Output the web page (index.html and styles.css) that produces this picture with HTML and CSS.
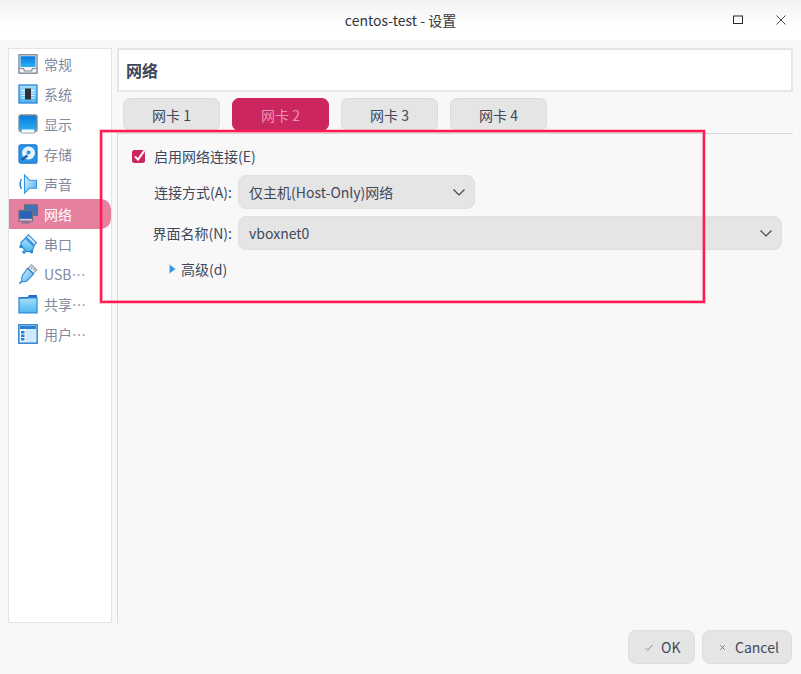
FILE: index.html
```html
<!DOCTYPE html>
<html lang="zh-CN">
<head>
<meta charset="utf-8">
<title>centos-test - 设置</title>
<link rel="stylesheet" href="styles.css">
</head>
<body>
<div class="window">
  <header class="titlebar">
    <span class="title">centos-test - 设置</span>
    <div class="win-controls">
      <svg class="win-icon" viewBox="0 0 10 10"><rect x="0.5" y="1" width="9" height="7.5" fill="none" stroke="#2b2b2b" stroke-width="1"/></svg>
      <svg class="win-icon" viewBox="0 0 10 10"><path d="M0.5 0.5L9.5 9.5M9.5 0.5L0.5 9.5" stroke="#444" stroke-width="1"/></svg>
    </div>
  </header>
  <div class="body">
    <nav class="sidebar">
      <div class="nav-item">
        <svg class="ico" viewBox="0 0 20 20">
          <defs>
            <linearGradient id="screen" x1="0" y1="0" x2="0" y2="1"><stop offset="0" stop-color="#0878dc"/><stop offset="1" stop-color="#2cb2f6"/></linearGradient>
            <linearGradient id="pale" x1="0" y1="0" x2="0" y2="1"><stop offset="0" stop-color="#a6e0fa"/><stop offset="1" stop-color="#4fb4ee"/></linearGradient>
            <linearGradient id="paleh" x1="0" y1="0" x2="1" y2="1"><stop offset="0" stop-color="#dff3fd"/><stop offset="1" stop-color="#4aaeeb"/></linearGradient>
          </defs>
          <rect x="1" y="0.800" width="18" height="18.400" fill="#f6f6f6" stroke="#7f8a96" stroke-width="1.400"/>
          <rect x="2.500" y="2.200" width="15" height="10.800" fill="url(#screen)"/>
          <path d="M1 14.500h4.500l1 2.500h7l1-2.500H19" fill="none" stroke="#7f8a96" stroke-width="1.200"/>
        </svg>
        <span>常规</span>
      </div>
      <div class="nav-item">
        <svg class="ico" viewBox="0 0 20 20">
          <rect x="1" y="1" width="18" height="18" fill="url(#pale)" stroke="#2a86d6" stroke-width="1.300"/>
          <path d="M3.500 6.500h13M3.500 9h13M3.500 11.500h13M3.500 14h13" stroke="#e4f5fd" stroke-width="1"/>
          <rect x="7" y="4.500" width="6" height="11" fill="#2d3036"/>
        </svg>
        <span>系统</span>
      </div>
      <div class="nav-item">
        <svg class="ico" viewBox="0 0 20 20">
          <rect x="1" y="1" width="18" height="16.500" rx="2" fill="url(#screen)" stroke="#7f8a96" stroke-width="1.400"/>
          <path d="M4 15.500h12l1 3.500H3z" fill="#fbfbfb"/>
          <path d="M1.500 15.500l2 3.500h13l2-3.500" fill="none" stroke="#9aa4ae" stroke-width="1"/>
        </svg>
        <span>显示</span>
      </div>
      <div class="nav-item">
        <svg class="ico" viewBox="0 0 20 20">
          <rect x="1" y="0.800" width="18" height="18.400" rx="2" fill="#2a94e8" stroke="#1c78cc" stroke-width="1.200"/>
          <circle cx="10.500" cy="9" r="6.500" fill="#e8f4fc"/>
          <circle cx="10.500" cy="8.500" r="2" fill="#2a94e8"/>
          <path d="M3.500 16l6-4.500" stroke="#1b5ea6" stroke-width="2.400"/>
        </svg>
        <span>存储</span>
      </div>
      <div class="nav-item">
        <svg class="ico" viewBox="0 0 20 20">
          <path d="M6.500 1l5 5.200h7v8h-7l-5 5z" fill="url(#paleh)" stroke="#3497e2" stroke-width="1.100"/>
          <path d="M3.500 5q-2.600 5 0 10" fill="none" stroke="#2a86d6" stroke-width="1.300"/>
          <path d="M1.600 8q-.9 2 0 4" fill="none" stroke="#7cc0ee" stroke-width="1"/>
        </svg>
        <span>声音</span>
      </div>
      <div class="nav-item active">
        <svg class="ico" viewBox="0 0 20 20">
          <rect x="6.500" y="0.800" width="13" height="10.500" fill="#3f74b8" stroke="#6a6f86" stroke-width="1.200"/>
          <rect x="1" y="6.500" width="13.500" height="10.500" fill="#2a62ba" stroke="#6a6f86" stroke-width="1.200"/>
          <path d="M1.500 14.800h12.500v1.800H1.500z" fill="#e4c3d0"/>
          <path d="M3.500 18.800h8.500" stroke="#6a6f86" stroke-width="1.200"/>
        </svg>
        <span>网络</span>
      </div>
      <div class="nav-item">
        <svg class="ico" viewBox="0 0 20 20">
          <path d="M10.500 0.800l8 8-2.300 2.300-8-8z" fill="#e2eff9" stroke="#2a86d6" stroke-width="1.100"/>
          <path d="M12 2.800l5 5M10.300 3.800l5.500 5.500" stroke="#8fb8da" stroke-width="0.700"/>
          <path d="M7.500 4l8.500 8.500-2 5-5.500 0-5.500-5.500 0-3.500z" fill="url(#pale)" stroke="#2a86d6" stroke-width="1.100"/>
          <circle cx="3" cy="12.500" r="1.700" fill="#2a86d6"/>
          <circle cx="13.500" cy="17.800" r="1.700" fill="#2a86d6"/>
          <circle cx="6" cy="18" r="1.700" fill="#2a86d6"/>
        </svg>
        <span>串口</span>
      </div>
      <div class="nav-item">
        <svg class="ico" viewBox="0 0 20 20">
          <path d="M13.500 0.800l5.200 5-3.300 3.400-5.200-5z" fill="#f2f2f2" stroke="#8c9ab0" stroke-width="1.100"/>
          <path d="M13.300 3.500l1 1M15.500 5.200l1 1" stroke="#5d6b82" stroke-width="1.200"/>
          <path d="M9.500 4.300l6 5.800-6.500 6.700c-1.500 1-3.500 1.300-5.200.5-.7-2-.2-4 .8-6z" fill="url(#paleh)" stroke="#2a86d6" stroke-width="1.100"/>
          <path d="M3.800 17.300l-2.300 2.300" stroke="#2a86d6" stroke-width="1.600"/>
        </svg>
        <span>USB…</span>
      </div>
      <div class="nav-item">
        <svg class="ico" viewBox="0 0 20 20">
          <path d="M9 4l2-3h8v5H9z" fill="#1f6fc4"/>
          <path d="M1 18.800V3.800h18v15z" fill="url(#pale)" stroke="#2a86d6" stroke-width="1.200"/>
          <path d="M1 3.800h9" stroke="#1f6fc4" stroke-width="1.200"/>
        </svg>
        <span>共享…</span>
      </div>
      <div class="nav-item">
        <svg class="ico" viewBox="0 0 20 20">
          <rect x="0.800" y="0.800" width="18.400" height="18.400" fill="#cfeafa" stroke="#2a7fd0" stroke-width="1.400"/>
          <rect x="2" y="2" width="16" height="3" fill="#2a7fd0"/>
          <rect x="2" y="5" width="5.500" height="13" fill="#f2fafe"/>
          <path d="M3 7h3.500v2.500H3zM3 10.500h3.500v2.500H3zM3 14h3.500v2.500H3z" fill="#2a7fd0"/>
        </svg>
        <span>用户…</span>
      </div>
    </nav>
    <main class="content">
      <div class="page-head">网络</div>
      <div class="tabs">
        <div class="tab">网卡 1</div>
        <div class="tab selected">网卡 2</div>
        <div class="tab">网卡 3</div>
        <div class="tab">网卡 4</div>
      </div>
      <section class="panel">
        <label class="check-row">
          <svg class="check" viewBox="0 0 14 14">
            <rect x="0" y="1" width="13" height="13" rx="2.500" fill="#cb2660"/>
            <path d="M3 7.500l3 3 6.500-9" fill="none" stroke="#e56a90" stroke-width="2.800"/>
            <path d="M3 7.500l3 3 6.500-9" fill="none" stroke="#fff" stroke-width="1.600"/>
          </svg>
          <span>启用网络连接(E)</span>
        </label>
        <div class="form">
          <div class="field-label">连接方式(A):</div>
          <div class="select narrow">
            <span>仅主机(Host-Only)网络</span>
            <svg class="chev" viewBox="0 0 12 7"><path d="M0.500 0.500L6 6l5.500-5.500" fill="none" stroke="#3c4658" stroke-width="1.200"/></svg>
          </div>
          <div class="field-label">界面名称(N):</div>
          <div class="select">
            <span>vboxnet0</span>
            <svg class="chev" viewBox="0 0 12 7"><path d="M0.500 0.500L6 6l5.500-5.500" fill="none" stroke="#3c4658" stroke-width="1.200"/></svg>
          </div>
        </div>
        <div class="advanced">
          <svg class="tri" viewBox="0 0 7 10"><path d="M0.500 0.500L6.500 5 0.500 9.500z" fill="#2a94e8" stroke="#a8d4f4" stroke-width="0.800"/></svg>
          <span>高级(d)</span>
        </div>
      </section>
      <div class="highlight"></div>
    </main>
  </div>
  <footer class="footer">
    <button class="btn btn-ok">
      <svg class="btn-check" viewBox="0 0 8 7"><path d="M0.500 4l2.300 2.300L7.500 0.800" fill="none" stroke="#7c8496" stroke-width="0.900"/></svg>
      OK
    </button>
    <button class="btn btn-cancel">
      <svg class="btn-x" viewBox="0 0 5 5"><path d="M0.300 0.300l4.400 4.400M4.700 0.300L0.300 4.700" stroke="#6c7486" stroke-width="0.900"/></svg>
      Cancel
    </button>
  </footer>
</div>
</body>
</html>
```
FILE: styles.css
```css
* { box-sizing: border-box; }
html, body { margin: 0; padding: 0; }
body {
  width: 801px;
  height: 674px;
  overflow: hidden;
  font-family: "Noto Sans CJK SC", "Noto Sans", sans-serif;
  font-size: 14px;
  color: #41485a;
  background: #f8f8f8;
}
.window { display: flex; flex-direction: column; height: 674px; position: relative; }
.titlebar {
  height: 40px;
  flex: none;
  background: linear-gradient(#f3f3f3, #ffffff 70%);
  position: relative;
  display: flex;
  align-items: center;
  justify-content: center;
}
.title { color: #33363c; font-size: 14px; }
.win-controls {
  position: absolute;
  right: 15px;
  top: 15px;
  display: flex;
  gap: 33px;
}
.win-icon { width: 10px; height: 10px; display: block; }
.body {
  flex: none;
  height: 583px;
  display: flex;
  padding: 8px 8px 0 8px;
  gap: 5px;
}
.sidebar {
  width: 104px;
  height: 575px;
  background: #fff;
  border: 1px solid #e4e4e4;
  display: flex;
  flex-direction: column;
}
.nav-item {
  height: 30px;
  display: flex;
  align-items: center;
  padding-left: 9px;
  gap: 6px;
  color: #7f8aa0;
  font-size: 14px;
  flex: none;
}
.nav-item.active {
  background: #e6809f;
  color: #fff;
  border-radius: 0 10px 10px 0;
}
.ico { width: 20px; height: 20px; flex: none; display: block; }
.content { flex: 1; min-width: 0; position: relative; display: flex; flex-direction: column; }
.page-head {
  height: 44px;
  flex: none;
  background: #fff;
  border: 2px solid #e5e5e5;
  padding-left: 7px;
  font-size: 16px;
  font-weight: 700;
  color: #3f475c;
  display: flex;
  align-items: center;
}
.tabs {
  display: flex;
  gap: 12px;
  padding: 6px 0 0 6px;
  height: 41px;
  flex: none;
}
.tab {
  width: 97px;
  height: 33px;
  background: #e5e5e5;
  border: 1px solid #dcdcdc;
  border-radius: 7px;
  display: flex;
  align-items: center;
  justify-content: center;
  font-size: 14px;
  color: #41485a;
}
.tab.selected { background: #cb2660; border-color: #cb2660; color: #eb93b0; }
.panel {
  flex: 1;
  border-top: 1px solid #d9d9d9;
  border-left: 1px solid #d9d9d9;
  padding: 12px 0 0 14px;
  display: flex;
  flex-direction: column;
}
.check-row { display: flex; align-items: center; gap: 8px; height: 20px; }
.check { width: 14px; height: 14px; flex: none; display: block; }
.form {
  display: grid;
  grid-template-columns: 114px 1fr;
  column-gap: 6px;
  row-gap: 7px;
  margin-top: 9px;
  margin-left: -14px;
  padding-right: 11px;
  align-items: center;
}
.field-label { text-align: right; }
.select {
  height: 34px;
  background: #e5e5e5;
  border: 1px solid #e0e0e0;
  border-radius: 8px;
  display: flex;
  align-items: center;
  justify-content: space-between;
  padding: 0 9px 0 10px;
}
.select.narrow { width: 237px; }
.chev { width: 12px; height: 7px; display: block; }
.advanced { display: flex; align-items: center; gap: 5px; margin: 9px 0 0 37px; height: 20px; }
.tri { width: 7px; height: 10px; display: block; }
.highlight {
  position: absolute;
  left: -17px;
  top: 82px;
  width: 605px;
  height: 173px;
  border: 2px solid #ff1c55;
  box-shadow: 0 0 0 1px rgba(255, 28, 85, 0.25), inset 0 0 0 1px rgba(255, 28, 85, 0.4);
}
.footer {
  flex: 1;
  display: flex;
  justify-content: flex-end;
  gap: 7px;
  padding: 7px 9px 0 0;
}
.btn {
  height: 34px;
  background: #e5e5e5;
  border: 1px solid #dedede;
  border-radius: 8px;
  font-family: inherit;
  font-size: 14px;
  color: #41485a;
  display: flex;
  align-items: center;
  justify-content: flex-start;
}
.btn-ok { width: 67px; padding: 0 0 0 16px; gap: 8px; }
.btn-cancel { width: 90px; padding: 0 0 0 17px; gap: 10px; }
.btn-check { width: 8px; height: 7px; display: block; }
.btn-x { width: 5px; height: 5px; display: block; }
```
